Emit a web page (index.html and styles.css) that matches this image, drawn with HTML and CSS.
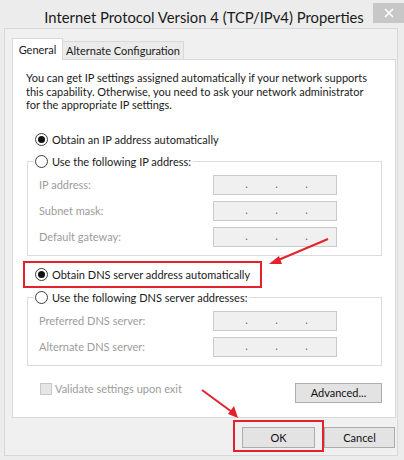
FILE: index.html
```html
<!DOCTYPE html>
<html>
<head>
<meta charset="utf-8">
<link rel="stylesheet" href="styles.css">
</head>
<body>
<div class="window">
  <div class="titlebar">
    <div class="title">Internet Protocol Version 4 (TCP/IPv4) Properties</div>
    <div class="close"><svg width="10" height="10" viewBox="0 0 10 10"><path d="M1 1L9 9M9 1L1 9" stroke="#fff" stroke-width="1.6"/></svg></div>
  </div>
  <div class="client">
    <div class="tabs">
      <div class="tab active">General</div>
      <div class="tab">Alternate Configuration</div>
    </div>
    <div class="panel">
      <p class="desc">You can get IP settings assigned automatically if your network supports<br>this capability. Otherwise, you need to ask your network administrator<br>for the appropriate IP settings.</p>
      <div class="radio-row first"><span class="radio checked"></span><span>Obtain an IP address automatically</span></div>
      <fieldset class="group">
        <legend><span class="radio"></span><span>Use the following IP address:</span></legend>
        <div class="fields">
          <div class="field"><span class="lbl">IP address:</span><div class="ip"><i>.</i><i>.</i><i>.</i></div></div>
          <div class="field"><span class="lbl">Subnet mask:</span><div class="ip"><i>.</i><i>.</i><i>.</i></div></div>
          <div class="field"><span class="lbl">Default gateway:</span><div class="ip"><i>.</i><i>.</i><i>.</i></div></div>
        </div>
      </fieldset>
      <div class="radio-row highlight"><span class="radio checked"></span><span>Obtain DNS server address automatically</span></div>
      <fieldset class="group dns">
        <legend><span class="radio"></span><span>Use the following DNS server addresses:</span></legend>
        <div class="fields">
          <div class="field"><span class="lbl">Preferred DNS server:</span><div class="ip"><i>.</i><i>.</i><i>.</i></div></div>
          <div class="field"><span class="lbl">Alternate DNS server:</span><div class="ip"><i>.</i><i>.</i><i>.</i></div></div>
        </div>
      </fieldset>
      <div class="bottom-row">
        <div class="check"><span class="box"></span><span>Validate settings upon exit</span></div>
        <div class="btn advanced">Advanced...</div>
      </div>
    </div>
    <div class="buttons">
      <div class="btn ok">OK<span class="ok-mark"></span></div>
      <div class="btn cancel">Cancel</div>
    </div>
  </div>
  <svg class="arrows" width="404" height="460" viewBox="0 0 404 460">
    <line x1="328" y1="239" x2="276" y2="261" stroke="#e3232b" stroke-width="2"/>
    <polygon points="269,264 279,256 282,264" fill="#e3232b"/>
    <line x1="202" y1="390" x2="232" y2="412" stroke="#e3232b" stroke-width="2"/>
    <polygon points="238,418 228,414 234,406" fill="#e3232b"/>
  </svg>
</div>
</body>
</html>
```
FILE: styles.css
```css
html, body {
  margin: 0;
  padding: 0;
}
body {
  width: 404px;
  height: 460px;
  overflow: hidden;
  background: #ececec;
  font-family: Lato, "Noto Sans", sans-serif;
  font-size: 11px;
  color: #1a1a1a;
  white-space: nowrap;
}
.window {
  position: relative;
  margin: 2px 0 0 4px;
  width: 400px;
}
.titlebar {
  display: flex;
  height: 26px;
}
.title {
  flex: 1;
  text-align: center;
  font-size: 14.8px;
  line-height: 22px;
  padding-top: 4px;
  padding-left: 31px;
  color: #1a1a1a;
}
.close {
  width: 31px;
  height: 20px;
  margin-top: 1px;
  background: #c7c7c7;
  display: flex;
  align-items: center;
  justify-content: center;
}
.client {
  box-sizing: border-box;
  width: 394px;
  height: 428px;
  border: 1px solid #d8d8d8;
  background: #f0f0f0;
  padding: 9px 0 0 7px;
}
.tabs {
  display: flex;
  align-items: flex-end;
  height: 22px;
  margin-bottom: -1px;
  position: relative;
  z-index: 1;
}
.tab {
  box-sizing: border-box;
  border: 1px solid #d9d9d9;
  border-bottom: none;
  text-align: center;
}
.tab.active {
  width: 51px;
  height: 22px;
  background: #fff;
  line-height: 21px;
}
.tab:not(.active) {
  width: 122px;
  height: 18px;
  margin-left: -1px;
  margin-bottom: 1px;
  background: #ebebeb;
  line-height: 18px;
}
.panel {
  box-sizing: border-box;
  width: 384px;
  height: 359px;
  background: #fff;
  border: 1px solid #d9d9d9;
  padding: 11px 13px 0 13px;
}
.desc {
  margin: 0;
  line-height: 13.5px;
}
.radio-row {
  display: flex;
  align-items: center;
  height: 16px;
}
.radio-row.first {
  margin-top: 20px;
  padding-left: 9px;
}
.radio {
  box-sizing: border-box;
  width: 13px;
  height: 13px;
  border: 1px solid #3c3c3c;
  border-radius: 50%;
  background: #fff;
  margin-right: 4px;
  display: inline-flex;
  align-items: center;
  justify-content: center;
  flex: none;
}
.radio.checked::after {
  content: "";
  width: 7px;
  height: 7px;
  border-radius: 50%;
  background: #111;
}
.group {
  box-sizing: border-box;
  width: 355px;
  margin: 6px 0 0 1px;
  border: 1px solid #dcdcdc;
  padding: 5px 0 8px 11px;
  min-width: 0;
}
.group legend {
  display: flex;
  align-items: center;
  height: 16px;
  padding: 0 2px 0 0;
  margin-left: -5px;
}
.group legend .radio {
  margin-left: 1px;
}
.fields {
  display: flex;
  flex-direction: column;
  gap: 6px;
}
.field {
  display: grid;
  grid-template-columns: 174px 124px;
  align-items: center;
  height: 20px;
}
.lbl {
  color: #9c9c9c;
}
.ip {
  box-sizing: border-box;
  height: 20px;
  border: 1px solid #cbcbcb;
  background: #f0f0f0;
  display: flex;
  padding-left: 31px;
  gap: 27px;
}
.ip i {
  font-style: normal;
  width: 3px;
  text-align: center;
  color: #6a6a6a;
  line-height: 16px;
}
.radio-row.highlight {
  box-sizing: border-box;
  width: 239px;
  height: 27px;
  margin: 5px 0 0 -3px;
  border: 2px solid #e3232b;
  padding-left: 10px;
}
.group.dns {
  margin-top: 2px;
}
.bottom-row {
  display: flex;
  justify-content: space-between;
  align-items: flex-start;
  margin-top: 17px;
}
.check {
  display: flex;
  align-items: center;
  margin-left: 14px;
  color: #9c9c9c;
  height: 12px;
  margin-top: 0;
}
.check .box {
  box-sizing: border-box;
  width: 12px;
  height: 12px;
  border: 1px solid #c8c8c8;
  background: #e6e6e6;
  margin-right: 3px;
}
.btn {
  box-sizing: border-box;
  height: 21px;
  border: 1px solid #adadad;
  background: #e3e3e3;
  display: flex;
  align-items: center;
  justify-content: center;
  color: #111;
}
.advanced {
  width: 87px;
  height: 20px;
}
.buttons {
  display: flex;
  justify-content: flex-end;
  gap: 9px;
  margin-top: 9px;
  padding-right: 2px;
}
.ok {
  width: 73px;
  position: relative;
}
.cancel {
  width: 71px;
}
.ok-mark {
  position: absolute;
  left: -10px;
  top: -8px;
  width: 91px;
  height: 32px;
  box-sizing: border-box;
  border: 2px solid #e3232b;
}
.arrows {
  position: absolute;
  left: -4px;
  top: -2px;
  pointer-events: none;
}
```
